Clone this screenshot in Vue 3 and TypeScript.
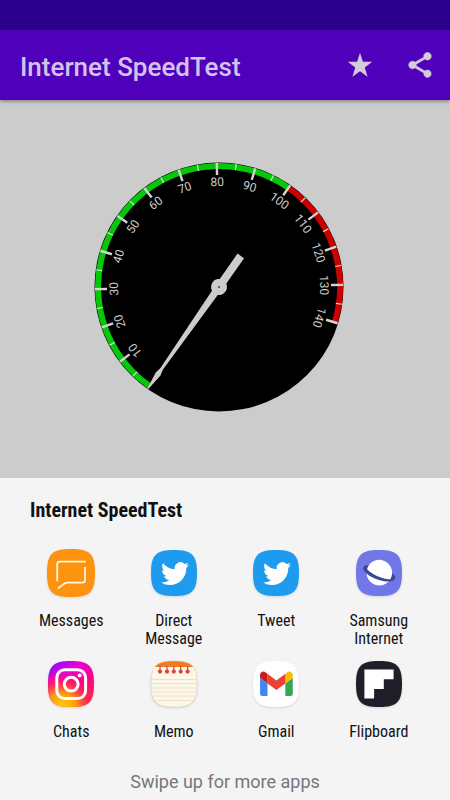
<script setup lang="ts">
interface Tick {
  value: number
  angle: number
  major: boolean
}

type AppId = 'messages' | 'twitter' | 'browser' | 'instagram' | 'memo' | 'gmail' | 'flipboard'

interface ShareTarget {
  label: string
  icon: AppId
}

const START_ANGLE = -145
const DEGREES_PER_UNIT = 1.8
const MAX_VALUE = 140
const RED_FROM = 100
const RING_RADIUS = 121

const angleOf = (value: number): number => START_ANGLE + value * DEGREES_PER_UNIT

const ticks: Tick[] = []
for (let value = 5; value <= MAX_VALUE; value += 5) {
  ticks.push({ value, angle: angleOf(value), major: value % 10 === 0 })
}
const majorTicks = ticks.filter((tick) => tick.major)

function arc(from: number, to: number): string {
  const point = (value: number): string => {
    const radians = (angleOf(value) * Math.PI) / 180
    return `${(RING_RADIUS * Math.sin(radians)).toFixed(2)} ${(-RING_RADIUS * Math.cos(radians)).toFixed(2)}`
  }
  const large = (to - from) * DEGREES_PER_UNIT > 180 ? 1 : 0
  return `M${point(from)}A${RING_RADIUS} ${RING_RADIUS} 0 ${large} 1 ${point(to)}`
}

const greenArc = arc(0, RED_FROM)
const redArc = arc(RED_FROM, MAX_VALUE)
const needleAngle = angleOf(0)

const squircle = 'M24 1C42 1 47 6 47 24S42 47 24 47S1 42 1 24S6 1 24 1Z'

const targets: ShareTarget[] = [
  { label: 'Messages', icon: 'messages' },
  { label: 'Direct Message', icon: 'twitter' },
  { label: 'Tweet', icon: 'twitter' },
  { label: 'Samsung Internet', icon: 'browser' },
  { label: 'Chats', icon: 'instagram' },
  { label: 'Memo', icon: 'memo' },
  { label: 'Gmail', icon: 'gmail' },
  { label: 'Flipboard', icon: 'flipboard' },
]
</script>

<template>
  <div class="screen">
    <div class="status-bar"></div>
    <header class="toolbar">
      <h1 class="toolbar-title">Internet SpeedTest</h1>
      <button class="action" type="button" aria-label="Rate">
        <svg width="30" height="30" viewBox="0 0 24 24" aria-hidden="true">
          <path d="M12 2.2L14.3 9.4H21.8L15.8 13.9L18.1 21.4L12 16.9L5.9 21.4L8.2 13.9L2.2 9.4H9.7Z" />
        </svg>
      </button>
      <button class="action" type="button" aria-label="Share">
        <svg width="30" height="30" viewBox="0 0 24 24" aria-hidden="true">
          <path stroke-width="0.5" d="M18 16.08c-.76 0-1.44.3-1.96.77L8.91 12.7c.05-.23.09-.46.09-.7s-.04-.47-.09-.7l7.05-4.11c.54.5 1.25.81 2.04.81 1.66 0 3-1.34 3-3s-1.34-3-3-3-3 1.34-3 3c0 .24.04.47.09.7L8.04 9.81C7.5 9.31 6.79 9 6 9c-1.66 0-3 1.34-3 3s1.34 3 3 3c.79 0 1.5-.31 2.04-.81l7.12 4.16c-.05.21-.08.43-.08.65 0 1.61 1.31 2.92 2.92 2.92s2.92-1.31 2.92-2.92-1.31-2.92-2.92-2.92z" />
        </svg>
      </button>
    </header>

    <main class="stage">
      <svg class="gauge" viewBox="-125 -125 250 250" role="img" aria-label="Speed gauge">
        <circle r="124.5" class="dial" />
        <path :d="greenArc" class="ring green" />
        <path :d="redArc" class="ring red" />
        <line
          v-for="tick in ticks"
          :key="tick.value"
          x1="0"
          x2="0"
          y1="-124"
          :y2="tick.major ? -112 : -118"
          :class="['tick', { major: tick.major }]"
          :transform="`rotate(${tick.angle})`"
        />
        <text
          v-for="tick in majorTicks"
          :key="tick.value"
          y="-101"
          class="number"
          :transform="`rotate(${tick.angle})`"
        >{{ tick.value }}</text>
        <g :transform="`rotate(${needleAngle})`" class="needle">
          <path d="M-4 38V0L-3.6 -8L-1.4 -100L-2.8 -106L-0.6 -124H0.6L2.8 -106L1.4 -100L3.6 -8L4 0V38Z" />
          <circle r="8" />
          <circle r="1" class="pin" />
        </g>
      </svg>
    </main>

    <section class="sheet">
      <h2 class="sheet-title">Internet SpeedTest</h2>
      <ul class="targets">
        <li v-for="target in targets" :key="target.label">
          <button class="target" type="button">
            <svg class="app-icon" viewBox="0 0 48 48" aria-hidden="true">
              <g v-if="target.icon === 'messages'">
                <path d="M24 0C43 0 48 5 48 24S43 48 24 48S0 43 0 24S5 0 24 0Z" fill="#fd930f" />
                <g fill="none" stroke="#fff6e4" stroke-width="1.8">
                  <path d="M38.7 12.7H12.6Q10.2 12.7 10.2 15.2V32.2" />
                  <path d="M38 18V31Q38 33.7 35.4 33.7H20.6Q19 33.7 17.6 34.6L10.8 39.4" />
                </g>
              </g>
              <g v-else-if="target.icon === 'twitter'">
                <path :d="squircle" fill="#1d9bee" />
                <path
                  transform="translate(11 10.6) scale(1.17)"
                  fill="#fff"
                  d="M23.953 4.57a10 10 0 01-2.825.775 4.958 4.958 0 002.163-2.723c-.951.555-2.005.959-3.127 1.184a4.92 4.92 0 00-8.384 4.482C7.69 8.095 4.067 6.13 1.64 3.162a4.822 4.822 0 00-.666 2.475c0 1.71.87 3.213 2.188 4.096a4.904 4.904 0 01-2.228-.616v.06a4.923 4.923 0 003.946 4.827 4.996 4.996 0 01-2.212.085 4.936 4.936 0 004.604 3.417 9.867 9.867 0 01-6.102 2.105c-.39 0-.779-.023-1.17-.067a13.995 13.995 0 007.557 2.209c9.053 0 13.998-7.496 13.998-13.985 0-.21 0-.42-.015-.63A9.935 9.935 0 0024 4.59z"
                />
              </g>
              <g v-else-if="target.icon === 'browser'">
                <path :d="squircle" fill="#7177e6" />
                <g transform="translate(24.3 23.7) rotate(20)">
                  <ellipse rx="16.8" ry="5.6" fill="#3e4796" />
                  <circle r="12.8" fill="#fff" />
                  <path d="M-16.8 0C-16.4 9.2 16.4 9.2 16.8 0C13 5.8 -12 5.4 -15.4 -2Z" fill="#3e4796" />
                </g>
              </g>
              <g v-else-if="target.icon === 'instagram'">
                <defs>
                  <linearGradient id="ig-base" x1="0.1" y1="0" x2="0.75" y2="1">
                    <stop offset="0" stop-color="#7a12f5" />
                    <stop offset="0.3" stop-color="#e800d8" />
                    <stop offset="0.65" stop-color="#ff0083" />
                    <stop offset="1" stop-color="#ff3640" />
                  </linearGradient>
                  <radialGradient id="ig-glow" cx="0.3" cy="1.02" r="0.8">
                    <stop offset="0" stop-color="#ffd400" />
                    <stop offset="0.4" stop-color="#ff9a10" />
                    <stop offset="0.7" stop-color="#ff2a50" stop-opacity="0.8" />
                    <stop offset="1" stop-color="#ff0078" stop-opacity="0" />
                  </radialGradient>
                </defs>
                <path :d="squircle" fill="url(#ig-base)" />
                <path :d="squircle" fill="url(#ig-glow)" />
                <g fill="none" stroke="#fff" stroke-width="3">
                  <rect x="9.8" y="9.8" width="28.8" height="28.8" rx="8" />
                  <circle cx="24.2" cy="24.2" r="6.9" />
                </g>
                <circle cx="32.7" cy="15.6" r="2" fill="#fff" />
              </g>
              <g v-else-if="target.icon === 'memo'">
                <clipPath id="memo-shape"><path :d="squircle" /></clipPath>
                <g clip-path="url(#memo-shape)">
                  <rect width="48" height="48" fill="#fdf7e8" />
                  <rect width="48" height="7" fill="#ee7b1f" />
                  <path d="M0 19.5H48M0 23.5H48M0 28H48M0 32H48M0 36H48M0 40.5H48" stroke="#ece0cd" stroke-width="1" />
                </g>
                <path :d="squircle" fill="none" stroke="#d9d0c2" stroke-width="0.6" />
                <path d="M10 6V11M17 6V11M23.8 6V11M30.7 6V11M37.6 6V11" stroke="#d8453a" stroke-width="1.2" />
                <g fill="#d8453a">
                  <circle v-for="x in [10, 17, 23.8, 30.7, 37.6]" :key="x" :cx="x" cy="11.6" r="2.1" />
                </g>
              </g>
              <g v-else-if="target.icon === 'gmail'">
                <path :d="squircle" fill="#fff" />
                <g transform="translate(-11.3 -4.1) scale(0.372)">
                  <path fill="#4285f4" d="M58 108h14V74L52 59v43c0 3.32 2.69 6 6 6" />
                  <path fill="#34a853" d="M120 108h14c3.32 0 6-2.69 6-6V59l-20 15" />
                  <path fill="#fbbc04" d="M120 48v26l20-15v-8c0-7.42-8.47-11.65-14.4-7.2" />
                  <path fill="#ea4335" d="M72 74V48l24 18 24-18v26L96 92" />
                  <path fill="#c5221f" d="M52 51v8l20 15V48l-5.6-4.2c-5.94-4.45-14.4-.22-14.4 7.2" />
                </g>
              </g>
              <g v-else>
                <path :d="squircle" fill="#1f1f29" />
                <path d="M9.4 9.5H38.6V19.2H28.8V28.9H19.1V38.6H9.4Z" fill="#fff" />
              </g>
            </svg>
            <span class="target-label">{{ target.label }}</span>
          </button>
        </li>
      </ul>
      <p class="hint">Swipe up for more apps</p>
    </section>
  </div>
</template>

<style>
body {
  background: #ccc;
}
</style>

<style scoped>
.screen {
  display: flex;
  flex-direction: column;
  min-height: 100vh;
  background: #ccc;
  font-family: Roboto, "Liberation Sans", sans-serif;
}

.status-bar {
  height: 30px;
  background: #2a008c;
}

.toolbar {
  display: flex;
  align-items: center;
  gap: 20px;
  height: 70px;
  padding: 0 10px 0 20px;
  background: #4f00bb;
  box-shadow: 0 1px 4px rgba(0, 0, 0, 0.45);
  box-sizing: border-box;
}

.toolbar-title {
  flex: 1;
  margin: 0;
  padding-top: 3px;
  color: #d3c3eb;
  font-size: 26px;
  font-weight: 500;
  line-height: 32px;
}

.action {
  display: grid;
  place-items: center;
  width: 40px;
  height: 40px;
  padding: 0;
  border: 0;
  background: none;
  fill: #d2cbd9;
  stroke: #d2cbd9;
  stroke-width: 0;
}

.stage {
  display: grid;
  flex: 1;
  place-items: center;
  padding: 16px 13px 21px 0;
}

.gauge {
  width: 56%;
  min-width: 250px;
  max-width: 420px;
}

.dial {
  fill: #000;
}

.ring {
  fill: none;
  stroke-width: 6;
}

.green {
  stroke: #04c808;
}

.red {
  stroke: #cc0000;
}

.tick {
  stroke: #d4ead4;
  stroke-width: 1.2;
}

.tick.major {
  stroke: #d4d4d4;
  stroke-width: 2.4;
}

.number {
  fill: #ccc;
  font-size: 12px;
  text-anchor: middle;
}

.needle {
  fill: #ccc;
}

.needle .pin {
  fill: #333;
}

.sheet {
  padding: 16px 20px 6px;
  background: #f4f4f4;
}

.sheet-title {
  margin: 0 10px;
  color: #111;
  font-family: "Roboto Condensed", Roboto, sans-serif;
  font-size: 20px;
  font-weight: 700;
  line-height: 32px;
}

.targets {
  display: grid;
  grid-template-columns: repeat(4, 1fr);
  row-gap: 12px;
  margin: 23px 0 0;
  padding: 0;
  list-style: none;
}

.target {
  display: flex;
  flex-direction: column;
  align-items: center;
  gap: 15px;
  width: 100%;
  padding: 0;
  border: 0;
  background: none;
}

.app-icon {
  width: 48px;
  height: 48px;
  filter: drop-shadow(0 1px 1px rgba(0, 0, 0, 0.12));
}

.target-label {
  width: 80px;
  min-height: 36px;
  color: #111;
  font-family: "Roboto Condensed", Roboto, sans-serif;
  font-size: 16px;
  line-height: 18px;
}

.hint {
  margin: 11px 0 0;
  color: #777;
  font-size: 18px;
  line-height: 24px;
  text-align: center;
}
</style>
